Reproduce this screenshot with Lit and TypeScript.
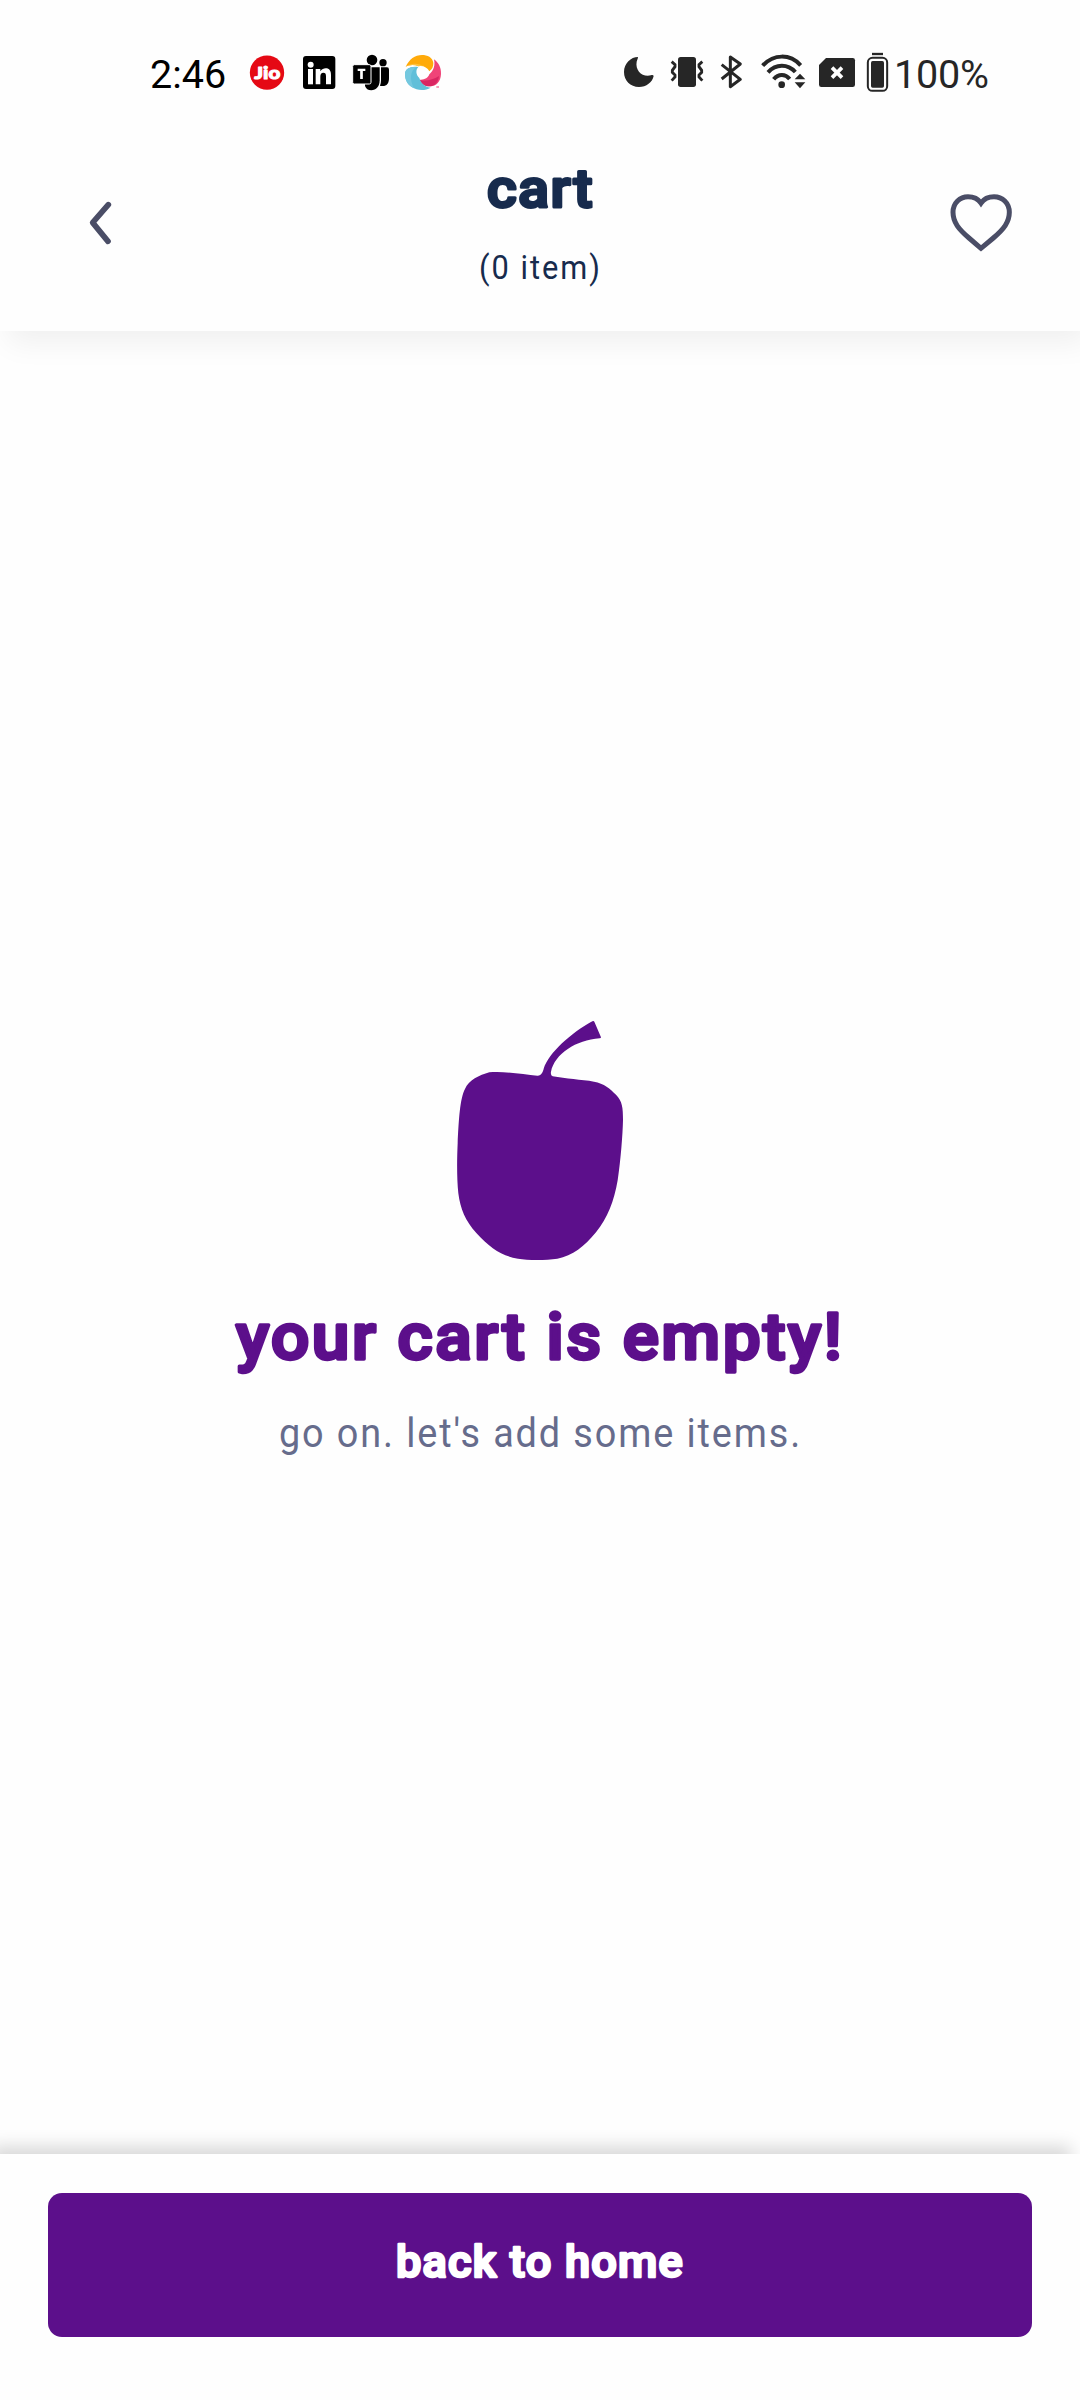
import { LitElement, html, css } from "lit";
import { customElement, property } from "lit/decorators.js";

/** One centred line of text with softly rounded stroke ends and a fixed run length. */
@customElement("rounded-text")
export class RoundedText extends LitElement {
  static styles = css`
    :host { display: block; }
    svg { display: block; overflow: visible; }
    text { font-family: Roboto, "Liberation Sans", sans-serif; fill: currentColor; stroke: currentColor;
      stroke-linejoin: round; text-anchor: middle; }
  `;

  @property() text = "";
  @property({ type: Number }) size = 40;
  @property({ type: Number }) run = 100;
  @property({ type: Number }) height = 60;
  @property({ type: Number }) weight = 500;
  @property({ type: Number }) edge = 0;
  @property({ type: Number }) spacing = 0;

  render() {
    return html`
      <svg width=${this.run} height=${this.height}>
        <text x=${this.run / 2} y=${this.height / 2 + this.size * 0.342} textLength=${this.run} lengthAdjust="spacingAndGlyphs"
          font-size=${this.size} font-weight=${this.weight} letter-spacing=${this.spacing} stroke-width=${this.edge}>${this.text}</text>
      </svg>
    `;
  }
}

@customElement("status-bar")
export class StatusBar extends LitElement {
  static styles = css`
    :host { display: flex; height: 149px; padding: 0 0 0 150px; box-sizing: border-box; align-items: flex-start;
      font-family: Roboto, "Liberation Sans", sans-serif; font-size: 39.5px; line-height: 149px; }
    .time { width: 97px; color: #000; white-space: nowrap; }
    .level { color: #262626; margin-left: 5px; white-space: nowrap; letter-spacing: -0.2px; }
    svg { display: block; flex: none; height: 70px; margin-top: 40px; color: #262626; }
    .app { width: 40px; }
    .linkedin { margin-left: 13px; }
    .teams { margin-left: 10px; }
    .swirl { margin-left: 13px; }
    .moon { width: 33px; margin-left: 179px; }
    .vibrate { width: 36px; margin-left: 14px; }
    .bluetooth { width: 24px; margin-left: 14px; }
    .wifi { width: 47px; margin-left: 17px; }
    .sim { width: 38px; margin-left: 11px; }
    .battery { width: 23px; margin-left: 10px; }
    .logo-text { font: 900 52px Lato, sans-serif; }
  `;

  render() {
    return html`
      <span class="time">2:46</span>
      <svg class="app" viewBox="321 0 120 210">
        <circle cx="381" cy="98" r="51.5" fill="#e50914"></circle>
        <text class="logo-text" x="382" y="116" text-anchor="middle" textLength="78" lengthAdjust="spacingAndGlyphs" fill="#fff" stroke="#fff" stroke-width="3" stroke-linejoin="round">Jio</text>
      </svg>
      <svg class="app linkedin" viewBox="480 0 120 210">
        <rect x="489" y="48" width="97" height="99" rx="9" fill="#000"></rect>
        <g fill="#fff"><circle cx="512" cy="74" r="9"></circle><rect x="504" y="87" width="15" height="46"></rect>
        <path d="M527 87H541V94C546 87 551 85 557 85C569 85 573 93 573 106V133H558V109C558 101 556 98 550 98C544 98 541 102 541 110V133H527Z"></path></g>
      </svg>
      <svg class="app teams" viewBox="630 0 120 210">
        <circle cx="696" cy="60" r="16"></circle><circle cx="729" cy="68" r="11"></circle>
        <path d="M674 82H719V121C719 140 708 151 694 151C684 151 678 146 675 138Z"></path>
        <path d="M723 82H741Q747 82 747 89V115C747 132 739 140 724 138C722 138 721 138 720 137Q723 131 723 121Z"></path>
        <rect x="638" y="74" width="55" height="58" rx="5" stroke="#fff" stroke-width="3"></rect>
        <path d="M653 86H676V93H668.500V117H660.500V93H653Z" fill="#fff"></path>
      </svg>
      <svg class="app swirl" viewBox="789 0 120 210">
        <path d="M797 81C807 58 825 45 846 45C862 45 878 52 880 69C880 80 877 87 868 94C862 82 848 76 836 79C822 73 807 74 797 81Z" fill="#ffaa0a"></path>
        <path d="M797 81C813 68 835 68 860 82C850 76 842 77 836 79C822 73 807 74 797 81Z" fill="#ffc03a"></path>
        <path d="M882 58C895 68 904 82 903 102C902 125 889 139 870 139C856 139 845 132 838 119C852 121 864 114 868 103C881 92 886 77 882 58Z" fill="#f04478"></path>
        <path d="M838 119C855 125 878 120 897 108C895 127 884 139 868 139C854 139 845 132 838 119Z" fill="#d92662"></path>
        <path d="M795 102C795 87 811 77 835 81C826 90 828 105 838 114C842 129 853 140 872 143C856 152 833 153 815 141C801 132 795 117 795 102Z" fill="#60bfd9"></path>
        <path d="M829 82C810 93 808 118 822 145C802 136 795 119 795 102C795 87 809 79 829 82Z" fill="#74c8df"></path>
        <path d="M889 141H897" stroke="#f06a94" stroke-width="4"></path>
      </svg>

      <svg class="moon" viewBox="36 0 99 210">
        <path d="M84 51C63 51 42 70 42 96C42 122 61 141 87 141C109 141 127 127 131 108C130 105 127 104 123 106C97 113 75 91 80 65C82 59 84 55 84 51Z" fill="currentColor"></path>
      </svg>
      <svg class="vibrate" viewBox="177 0 108 210">
        <rect x="204" y="51" width="54" height="90" rx="8" fill="currentColor"></rect>
        <path d="M185 65L195 74V80L187 91V97L195 105V111L185 122M277 65L267 74V80L275 91V97L267 105V111L277 122" fill="none" stroke="currentColor" stroke-width="8.5"></path>
      </svg>
      <svg class="bluetooth" viewBox="327 0 72 210">
        <path d="M335 74L391 118L361 140V51L391 72L335 117" fill="none" stroke="currentColor" stroke-width="9" stroke-linejoin="round"></path>
      </svg>
      <svg class="wifi" viewBox="450 0 141 210">
        <g fill="none" stroke="currentColor" stroke-width="12"><path d="M458 77C491 41 540 41 572 76"></path><path d="M474 97C498 71 533 71 556 96"></path><path d="M491 118C505 101 526 101 539 117"></path></g>
        <circle cx="515" cy="134" r="10" fill="currentColor"></circle>
        <path d="M554 118L570 101L586 118ZM554 127H586L570 145Z" fill="currentColor"></path>
      </svg>
      <svg class="sim" viewBox="54 0 114 210">
        <path d="M78 54H158Q165 54 165 61V134Q165 141 158 141H64Q57 141 57 134V75Z" fill="currentColor"></path>
        <path d="M96 83L126 113M126 83L96 113" stroke="#fff" stroke-width="11"></path>
      </svg>
      <svg class="battery" viewBox="198 0 69 210">
        <path d="M216 42H249" stroke="currentColor" stroke-width="7"></path>
        <rect x="203.500" y="53.500" width="58" height="99" rx="14" fill="none" stroke="currentColor" stroke-width="6"></rect>
        <rect x="213" y="63" width="39" height="80" rx="5" fill="currentColor"></rect>
      </svg>
      <span class="level">100%</span>
    `;
  }
}

@customElement("cart-header")
export class CartHeader extends LitElement {
  static styles = css`
    :host { display: grid; grid-template-columns: 80px 1fr 80px; height: 182px; padding: 0 60px; box-sizing: border-box; color: #172b4d; }
    .icon { display: block; width: 80px; height: 100px; margin-top: 21px; color: #4a4d66; overflow: visible; }
    .titles { display: flex; flex-direction: column; align-items: center; }
    .title { margin: 0; }
    .count { margin-top: 8px; }
  `;

  render() {
    return html`
      <svg class="icon" viewBox="0 0 240 300">
        <path d="M145 104L98 158L144 214" fill="none" stroke="currentColor" stroke-width="17" stroke-linecap="round" stroke-linejoin="round"></path>
      </svg>
      <div class="titles">
        <h1 class="title"><rounded-text text="cart" size="54" run="107" height="80" weight="500" edge="3" spacing="1.4"></rounded-text></h1>
        <rounded-text class="count" text="(0 item)" size="34" run="123" height="60" weight="400" spacing="2.2"></rounded-text>
      </div>
      <svg class="icon" viewBox="30 0 240 300">
        <path d="M153 235L117 204C86 177 69 157 69 127C69 99 90 80 114 80C130 80 144 86 153 99C162 86 176 80 192 80C217 80 238 99 238 127C238 157 221 177 190 204Z" fill="none" stroke="currentColor" stroke-width="15"></path>
      </svg>
    `;
  }
}

@customElement("empty-cart")
export class EmptyCart extends LitElement {
  static styles = css`
    :host { display: flex; flex-direction: column; align-items: center; padding-top: 669px; box-sizing: border-box; }
    .apple { display: block; width: 220px; height: 280px; }
    .heading { margin: 16px 0 0; color: #5c0f8b; }
    .hint { margin: 23px 0 0; color: #666c8c; }
  `;

  render() {
    return html`
      <svg class="apple" viewBox="0 0 660 840">
        <path fill="#5c0f8b" d="M487 64Q491 61 493 65L513 112Q513 115 509 115C438 120 374 162 363 215Q361 226 368 229C407 236 454 239 492 245C522 250 541 267 558 284C577 304 579 322 579 360C578 405 572 480 563 541C552 605 533 653 498 697C463 740 428 767 382 776C347 781 294 781 264 776C214 768 181 744 139 699C106 663 91 627 85 580C80 535 81 474 83 430C86 363 90 294 105 267C116 241 148 225 178 217C218 213 278 222 322 227C334 228 339 215 341 206C357 158 423 99 487 64Z"></path>
      </svg>
      <h2 class="heading"><rounded-text text="your cart is empty!" size="65" run="608" height="82" weight="500" edge="3.4" spacing="2.4"></rounded-text></h2>
      <rounded-text class="hint" text="go on. let's add some items." size="40" run="523" height="64" weight="400" spacing="2"></rounded-text>
    `;
  }
}

@customElement("app-root")
export class AppRoot extends LitElement {
  static styles = css`
    :host { display: block; }
    .screen { display: flex; flex-direction: column; width: 1080px; height: 2400px; overflow: hidden; background: #fefefe; }
    .top { flex: none; height: 331px; background: #fefefe; box-shadow: 8px 12px 28px rgba(0, 0, 0, 0.06); }
    .body { flex: 1; }
    .bottom { flex: none; height: 246px; padding: 39px 48px 0; box-sizing: border-box; background: #fefefe;
      box-shadow: -9px -8px 16px rgba(0, 0, 0, 0.15); }
    .home { display: flex; justify-content: center; align-items: center; width: 100%; height: 144px; padding: 0 0 7px; border: 0;
      border-radius: 14px; background: #5c0f8b; color: #fff; }
  `;

  render() {
    return html`
      <div class="screen">
        <div class="top">
          <status-bar></status-bar>
          <cart-header></cart-header>
        </div>
        <empty-cart class="body"></empty-cart>
        <div class="bottom">
          <button class="home"><rounded-text text="back to home" size="44" run="288" height="60" weight="500" edge="2.6" spacing="1.2"></rounded-text></button>
        </div>
      </div>
    `;
  }
}
